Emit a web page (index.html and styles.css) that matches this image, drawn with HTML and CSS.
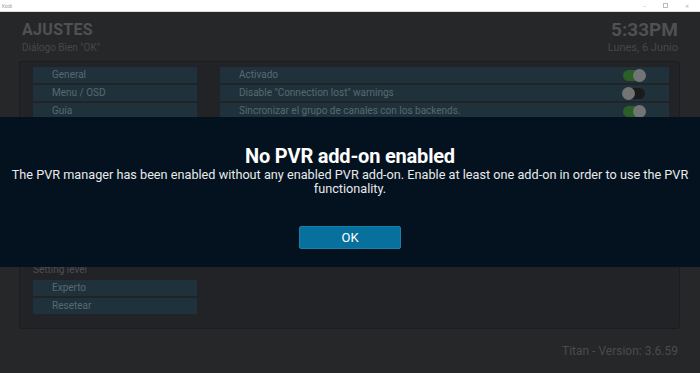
FILE: index.html
```html
<!DOCTYPE html>
<html lang="es">
<head>
    <meta charset="UTF-8">
    <title>Kodi</title>
    <link rel="stylesheet" href="styles.css">
</head>
<body>
    <div class="titlebar">
        <span class="app-name">Kodi</span>
        <div class="win-controls">
            <span>&#8211;</span>
            <span class="restore"></span>
            <span>&#10005;</span>
        </div>
    </div>

    <div class="screen">
        <div class="header">
            <div>
                <h1>AJUSTES</h1>
                <div class="sub">Diálogo Bien "OK"</div>
            </div>
            <div class="clock">
                <div class="time">5:33PM</div>
                <div class="sub">Lunes, 6 Junio</div>
            </div>
        </div>

        <div class="panel">
            <div class="categories">
                <div class="item">General</div>
                <div class="item">Menu / OSD</div>
                <div class="item">Guía</div>
                <div class="level">
                    <div class="level-label">Setting level</div>
                    <div class="item">Experto</div>
                    <div class="item">Resetear</div>
                </div>
            </div>
            <div class="settings">
                <div class="item row">Activado <span class="toggle on"></span></div>
                <div class="item row">Disable "Connection lost" warnings <span class="toggle"></span></div>
                <div class="item row">Sincronizar el grupo de canales con los backends. <span class="toggle on"></span></div>
            </div>
        </div>

        <div class="footer">Titan - Version: 3.6.59</div>

        <div class="dialog">
            <h2>No PVR add-on enabled</h2>
            <p>The PVR manager has been enabled without any enabled PVR add-on. Enable at least one add-on in order to use the PVR functionality.</p>
            <button class="ok">OK</button>
        </div>
    </div>
</body>
</html>
```

FILE: styles.css
```css
body {
    margin: 0;
    width: 700px;
    height: 373px;
    overflow: hidden;
    font-family: 'Roboto', 'Liberation Sans', sans-serif;
    background-color: #262729;
}

.titlebar {
    height: 11px;
    background-color: #ffffff;
    border-bottom: 1px solid #dcdcdc;
    display: flex;
    justify-content: space-between;
    align-items: center;
    padding-left: 2px;
    font-size: 5px;
    color: #999;
}

.win-controls {
    display: flex;
    align-items: center;
    gap: 17px;
    padding-right: 11px;
    color: #aaa;
    font-size: 5px;
}

.restore {
    width: 3px;
    height: 3px;
    border: 1px solid #bbb;
}

.screen {
    position: relative;
    height: 361px;
    display: flex;
    flex-direction: column;
}

.header {
    display: flex;
    justify-content: space-between;
    padding: 9px 22px 0 22px;
    height: 40px;
    color: #505154;
}

.header h1 {
    margin: 0;
    font-size: 16px;
    line-height: 18px;
    font-weight: bold;
    letter-spacing: 0.3px;
}

.header .sub {
    font-size: 10px;
    line-height: 14px;
    margin-top: 2px;
    color: #46474a;
}

.clock {
    text-align: right;
}

.clock .time {
    font-size: 19px;
    line-height: 18px;
    font-weight: bold;
}

.clock .sub {
    font-size: 11px;
}

.panel {
    margin: 0 20px 0 19px;
    height: 268px;
    box-sizing: border-box;
    background-color: #222326;
    border: 1px solid #1c1d1f;
    border-radius: 3px;
    padding: 5px 10px 14px 13px;
    display: flex;
    gap: 23px;
}

.categories {
    width: 164px;
    display: flex;
    flex-direction: column;
    gap: 2px;
}

.settings {
    flex: 1;
    display: flex;
    flex-direction: column;
    gap: 2px;
}

.item {
    height: 16px;
    background-color: #1f323c;
    color: #58696f;
    font-size: 10px;
    line-height: 16px;
    padding-left: 19px;
}

.row {
    display: flex;
    justify-content: space-between;
    align-items: center;
    padding-right: 24px;
}

.toggle {
    width: 22px;
    height: 11px;
    border-radius: 6px;
    background-color: #1a1b1c;
    position: relative;
}

.toggle::after {
    content: '';
    position: absolute;
    top: -1px;
    left: -1px;
    width: 13px;
    height: 13px;
    border-radius: 50%;
    background-color: #727476;
}

.toggle.on {
    background-color: #2c5e27;
}

.toggle.on::after {
    left: auto;
    right: -1px;
}

.level {
    margin-top: auto;
    display: flex;
    flex-direction: column;
    gap: 2px;
}

.level-label {
    font-size: 10px;
    color: #4d4e51;
    line-height: 12px;
    margin-bottom: 2px;
}

.footer {
    text-align: right;
    padding: 15px 22px 0 0;
    font-size: 12px;
    color: #4a4b4e;
}

.dialog {
    position: absolute;
    left: 0;
    right: 0;
    top: 105px;
    height: 150px;
    background-color: #04111e;
    color: #ffffff;
    text-align: center;
    box-sizing: border-box;
    padding-top: 27px;
}

.dialog h2 {
    margin: 0;
    font-size: 20px;
    line-height: 24px;
    font-weight: bold;
    letter-spacing: -0.2px;
}

.dialog p {
    margin: 0 5px;
    font-size: 12.7px;
    line-height: 14px;
    color: #e8eaec;
}

.ok {
    margin-top: 30px;
    width: 102px;
    height: 23px;
    border: 1px solid #1a80ab;
    border-radius: 2px;
    background-color: #07709c;
    color: #ffffff;
    font-family: 'Roboto', 'Liberation Sans', sans-serif;
    font-size: 13px;
}
```
